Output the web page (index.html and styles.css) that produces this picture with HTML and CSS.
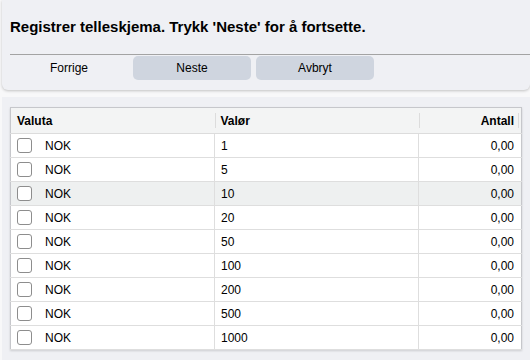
FILE: index.html
```html
<!DOCTYPE html>
<html lang="no">
<head>
  <meta charset="UTF-8">
  <title>Telleskjema</title>
  <link rel="stylesheet" href="styles.css">
</head>
<body>

<div class="topPanel">
  <h1>Registrer telleskjema. Trykk 'Neste' for å fortsette.</h1>
  <div class="toolbar">
    <button class="btn plain">Forrige</button>
    <button class="btn">Neste</button>
    <button class="btn">Avbryt</button>
  </div>
</div>

<div class="gridPanel">
  <table class="grid">
    <thead>
      <tr>
        <th class="colValuta"><span>Valuta</span></th>
        <th class="colValor"><span>Valør</span></th>
        <th class="colAntall"><span>Antall</span></th>
      </tr>
    </thead>
    <tbody id="rows"></tbody>
  </table>
</div>

<script>
  const valorer = [1, 5, 10, 20, 50, 100, 200, 500, 1000];
  const rows = document.getElementById("rows");

  valorer.forEach(function (v, i) {
    const tr = document.createElement("tr");
    if (i === 2) tr.className = "hover";
    tr.innerHTML = `
      <td><span class="check"></span>NOK</td>
      <td>${v}</td>
      <td class="num">0,00</td>
    `;
    rows.appendChild(tr);
  });
</script>
</body>
</html>
```

FILE: styles.css
```css
* { box-sizing: border-box; }
body {
  margin: 0;
  background: #f8f8f9;
  font-family: "Liberation Sans", Arial, sans-serif;
  color: #000;
}
.topPanel {
  margin-left: 2px;
  height: 90px;
  background: #eff0f4;
  border-radius: 0 0 6px 6px;
  box-shadow: 0 1px 3px rgba(0,0,0,0.22);
}
h1 {
  margin: 0;
  padding: 18px 8px 0;
  height: 54px;
  font-size: 15px;
  line-height: 17px;
  font-weight: bold;
}
.toolbar {
  margin-left: 8px;
  border-top: 1px solid #a3a3a3;
  padding-top: 1px;
  display: flex;
  gap: 5px;
}
.btn {
  width: 118px;
  height: 24px;
  border: none;
  border-radius: 5px;
  background: #cfd5df;
  font-family: "Liberation Sans", Arial, sans-serif;
  font-size: 12px;
  color: #000;
  padding: 0;
}
.btn.plain { background: transparent; }
.gridPanel {
  margin: 7px 0 0 2px;
  padding: 10px 8px 10px 8px;
  background: #eff0f4;
}
.grid {
  width: 512px;
  border-collapse: collapse;
  border: 1px solid #c6c7cb;
  background: #fff;
  font-size: 12px;
  box-shadow: 0 1px 2px rgba(0,0,0,0.15);
}
.grid th {
  height: 26px;
  background: #f3f4f4;
  text-align: left;
  font-weight: bold;
  padding: 0 6px;
  border-bottom: 1px solid #dcdcdc;
  position: relative;
}
.grid th + th::before {
  content: "";
  position: absolute;
  left: 0;
  top: 5px;
  bottom: 5px;
  border-left: 1px solid #dcdcdc;
}
.grid th.colAntall { text-align: right; padding-right: 7px; }
.grid th.colAntall::after {
  content: "";
  position: absolute;
  right: 2px;
  top: 5px;
  bottom: 5px;
  border-left: 1px solid #dcdcdc;
}
.colValuta { width: 204px; }
.colValor { width: 204px; }
.grid td {
  height: 24px;
  padding: 1px 6px 0;
  border-bottom: 1px solid #dedede;
  border-left: 1px solid #dedede;
}
.grid td:first-child { border-left: none; }
.grid td.num { text-align: right; padding-right: 7px; }
.grid tr.hover td { background: #eef0f0; }
.check {
  display: inline-block;
  vertical-align: middle;
  width: 15px;
  height: 15px;
  margin: -2px 13px 0 0;
  border: 1px solid #8d8d8d;
  border-radius: 3px;
  background: #fff;
}
```
